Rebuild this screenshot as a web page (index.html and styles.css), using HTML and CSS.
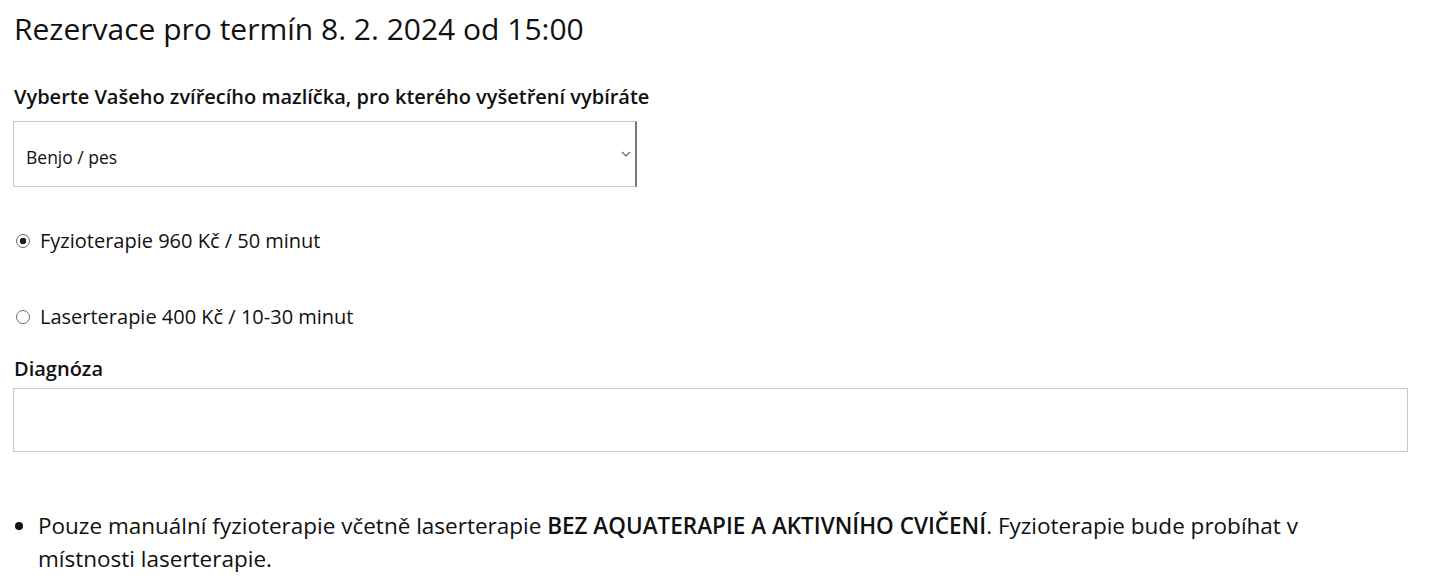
FILE: index.html
```html
<!DOCTYPE html>
<html>

<head>
    <meta charset="utf-8">
    <link rel="stylesheet" href="styles.css">
</head>

<body>
    <div class="page">
        <h1 class="title">Rezervace pro termín 8. 2. 2024 od 15:00</h1>

        <form class="booking">
            <label class="field-label" for="pet">Vyberte Vašeho zvířecího mazlíčka, pro kterého vyšetření vybíráte</label>
            <div class="select-wrap">
                <select id="pet" class="pet-select">
                    <option>Benjo / pes</option>
                </select>
                <svg class="chevron" width="10" height="6" viewBox="0 0 10 6">
                    <path d="M1 1 L5 5 L9 1" fill="none" stroke="#666" stroke-width="1.2" />
                </svg>
            </div>

            <div class="option first">
                <input type="radio" name="service" id="fyzio" checked>
                <label for="fyzio">Fyzioterapie 960 Kč / 50 minut</label>
            </div>
            <div class="option">
                <input type="radio" name="service" id="laser">
                <label for="laser">Laserterapie 400 Kč / 10-30 minut</label>
            </div>

            <label class="field-label diag" for="diag">Diagnóza</label>
            <input type="text" id="diag" class="diag-input">
        </form>

        <ul class="notes">
            <li>Pouze manuální fyzioterapie včetně laserterapie <strong>BEZ AQUATERAPIE A AKTIVNÍHO CVIČENÍ</strong>. Fyzioterapie bude probíhat v místnosti laserterapie.</li>
        </ul>
    </div>
</body>

</html>
```

FILE: styles.css
```css
body {
    margin: 0;
    font-family: "Open Sans", sans-serif;
    color: #111;
    background: #fff;
}

.page {
    padding: 0 37px 0 13px;
}

.title {
    font-size: 30px;
    font-weight: 400;
    line-height: 36px;
    margin: 11px 0 0 1px;
}

.booking {
    display: flex;
    flex-direction: column;
}

.field-label {
    font-size: 20px;
    font-weight: 600;
    line-height: 27px;
    margin: 36px 0 0 1px;
}

.field-label.diag {
    margin-top: 25px;
}

.select-wrap {
    position: relative;
    width: 624px;
    margin-top: 11px;
}

.pet-select {
    appearance: none;
    display: block;
    width: 100%;
    height: 66px;
    padding: 5px 12px 0;
    font-family: "Open Sans", sans-serif;
    font-size: 17.5px;
    color: #111;
    background: #fff;
    border: 1px solid #c8c8c8;
    border-right: 2px solid #777;
    border-radius: 0;
}

.chevron {
    position: absolute;
    right: 6px;
    top: 30px;
}

.option {
    display: flex;
    align-items: center;
    font-size: 20px;
    line-height: 27px;
    margin-top: 49px;
}

.option.first {
    margin-top: 40px;
}

.option input {
    appearance: none;
    flex: none;
    width: 14px;
    height: 14px;
    margin: 0 10px 0 3px;
    border: 1px solid #6a6a6a;
    border-radius: 50%;
    background: #fff;
}

.option input:checked {
    background: radial-gradient(circle, #222 0 3px, #fff 3.6px);
}

.diag-input {
    height: 62px;
    margin-top: 6px;
    border: 1px solid #c8c8c8;
    border-radius: 0;
    padding: 0 12px;
    font-family: "Open Sans", sans-serif;
    font-size: 17.5px;
}

.notes {
    margin: 57px 0 0 0;
    padding: 0 80px 0 25px;
    font-size: 22.5px;
    line-height: 33px;
}

.notes strong {
    font-weight: 600;
}
```
